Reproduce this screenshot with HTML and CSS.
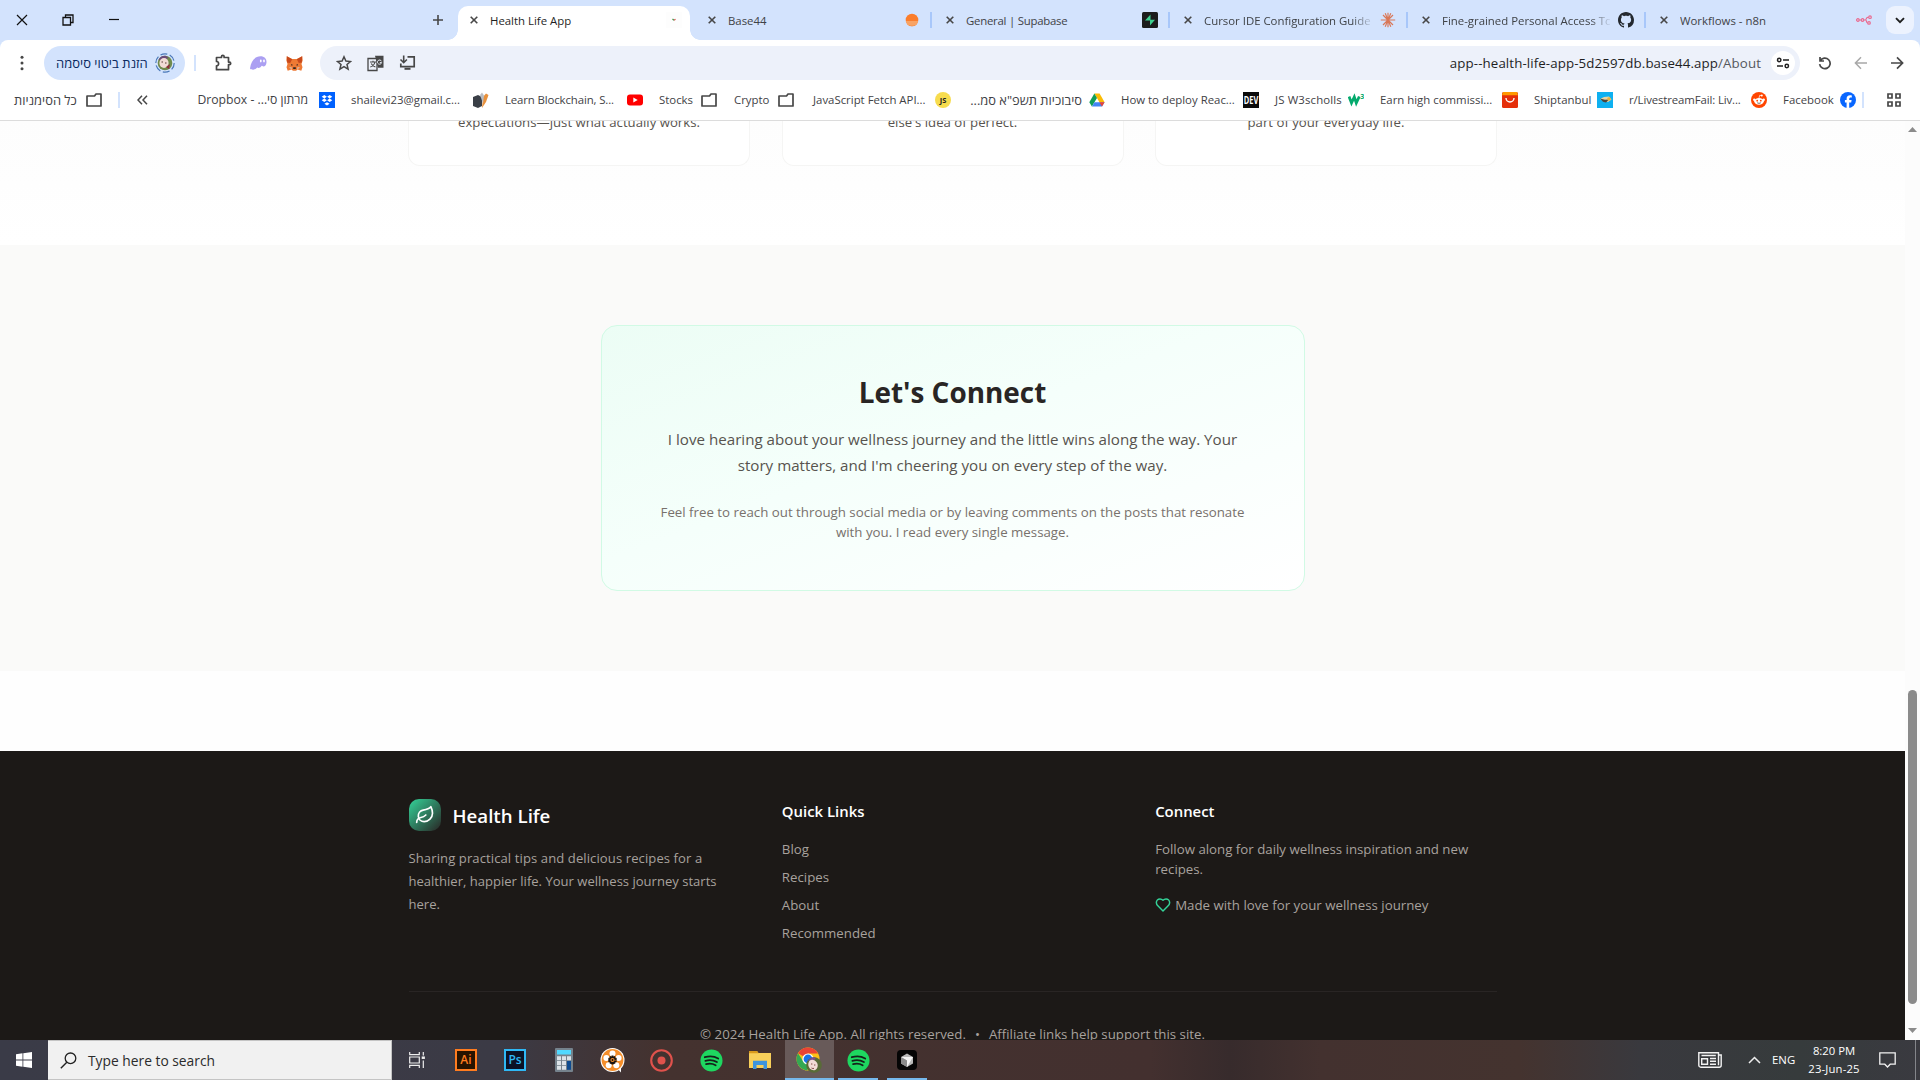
FILE: index.html
```html
<!DOCTYPE html>
<html lang="en">
<head>
<meta charset="utf-8">
<title>Health Life App</title>
<link rel="stylesheet" href="styles.css">
</head>
<body>
<svg class="defs" aria-hidden="true">
  <defs>
    <symbol id="x" viewBox="0 0 8 8"><path d="M.7.7l6.600 6.600M7.300.7L.7 7.300" stroke="currentColor" stroke-width="1.600" fill="none"/></symbol>
    <symbol id="folder" viewBox="0 0 16 16"><path d="M1 4h7.500l1.500-2h5v12H1z" fill="none" stroke="#474747" stroke-width="1.700" stroke-linejoin="round"/></symbol>
    <symbol id="spotify" viewBox="0 0 24 24"><circle cx="12" cy="12" r="11.500" fill="#1ed760"/><path d="M5 8.600c5-1.400 10-1 14 1.300M5.600 12.300c4.200-1.200 8.400-.8 12 1.200M6.300 15.800c3.500-.9 7-.6 10 1.100" stroke="#14211a" stroke-width="1.900" fill="none" stroke-linecap="round"/></symbol>
  </defs>
</svg>

<header class="tabstrip">
  <div class="window-controls">
    <svg width="12" height="12" viewBox="0 0 12 12"><path d="M1 1l10 10M11 1L1 11" stroke="#111" stroke-width="1.200"/></svg>
    <svg width="12" height="12" viewBox="0 0 12 12"><path d="M1 3.500h7.500v7.500H1zM3.500 3V1H11v7.500H9" stroke="#111" stroke-width="1.300" fill="none"/></svg>
    <svg width="12" height="12" viewBox="0 0 12 12"><path d="M1 5.500h10" stroke="#111" stroke-width="1.200"/></svg>
  </div>
  <svg class="new-tab" width="12" height="12" viewBox="0 0 12 12"><path d="M6 1v10M1 6h10" stroke="#474747" stroke-width="1.600"/></svg>
  <nav class="tabs">
    <div class="tab active">
      <svg class="close"><use href="#x"/></svg><span class="tab-title">Health Life App</span>
      <svg class="fav" viewBox="0 0 16 16"><rect width="16" height="16" fill="#fdfdfd"/><path d="M6.500 7l1.500 1.300" stroke="#3c9a4a" stroke-width="1.200"/><path d="M8 8.300l1.500-1" stroke="#d9534f" stroke-width="1.200"/></svg>
    </div>
    <div class="tab">
      <svg class="close"><use href="#x"/></svg><span class="tab-title">Base44</span>
      <svg class="fav" viewBox="0 0 16 16"><circle cx="8" cy="8" r="6.300" fill="#fb7d2b"/><path d="M1.800 9h12.400a6.300 6.300 0 0 1-12.400 0z" fill="#f79a56"/><path d="M2 10h12M3 12h10" stroke="#fcb987" stroke-width=".6"/></svg>
    </div>
    <div class="tab sep">
      <svg class="close"><use href="#x"/></svg><span class="tab-title snug">General | Supabase</span>
      <svg class="fav" viewBox="0 0 16 16"><rect width="16" height="16" rx="1.500" fill="#1c1c1c"/><path d="M8.500 2.500v5.200H13L8 13.500V8.600H3z" fill="#3ecf8e"/></svg>
    </div>
    <div class="tab sep">
      <svg class="close"><use href="#x"/></svg><span class="tab-title faded">Cursor IDE Configuration Guide</span>
      <svg class="fav" viewBox="0 0 16 16"><path d="M8 .8v14.400M.8 8h14.400M3 3l10 10M13 3L3 13M5.200 1.300l5.600 13.400M10.800 1.300L5.200 14.700" stroke="#d97757" stroke-width="1.150"/></svg>
    </div>
    <div class="tab sep">
      <svg class="close"><use href="#x"/></svg><span class="tab-title faded">Fine-grained Personal Access Tokens</span>
      <svg class="fav" viewBox="0 0 16 16"><path fill="#24292f" d="M8 0C3.580 0 0 3.580 0 8c0 3.540 2.290 6.530 5.470 7.590.4.070.55-.17.55-.38 0-.19-.01-.82-.01-1.490-2.010.37-2.530-.49-2.690-.94-.09-.23-.48-.94-.82-1.130-.28-.15-.68-.52-.01-.53.63-.01 1.080.58 1.230.82.72 1.210 1.870.87 2.330.66.070-.52.28-.87.51-1.070-1.780-.2-3.640-.89-3.640-3.950 0-.87.31-1.590.82-2.150-.08-.2-.36-1.020.08-2.120 0 0 .67-.21 2.200.82.64-.18 1.320-.27 2-.27s1.360.09 2 .27c1.530-1.040 2.200-.82 2.200-.82.44 1.100.16 1.920.08 2.120.51.56.82 1.270.82 2.150 0 3.070-1.870 3.750-3.650 3.950.29.25.54.73.54 1.480 0 1.070-.01 1.930-.01 2.200 0 .21.15.46.55.38A8.010 8.010 0 0 0 16 8c0-4.420-3.580-8-8-8z"/></svg>
    </div>
    <div class="tab sep">
      <svg class="close"><use href="#x"/></svg><span class="tab-title">Workflows - n8n</span>
      <svg class="fav" viewBox="0 0 16 16"><g fill="none" stroke="#ea6a8f" stroke-width="1.200"><circle cx="1.900" cy="8" r="1.300"/><circle cx="6.500" cy="8" r="1.300"/><path d="M3.200 8h2M7.800 8h1.400c1.500 0 .8-2.700 2.400-2.700h1M9.500 8c1.500 0 .5 2.900 2.100 2.900"/><circle cx="14" cy="5.200" r="1.300"/><circle cx="13" cy="10.900" r="1.300"/></g></svg>
    </div>
  </nav>
  <button class="tab-search"><svg width="10" height="7" viewBox="0 0 10 7"><path d="M1 1.200l4 4 4-4" fill="none" stroke="#1f1f1f" stroke-width="1.900"/></svg></button>
</header>

<div class="chrome">
  <div class="toolbar">
    <svg class="menu" width="4" height="16" viewBox="0 0 4 16" fill="#474747"><circle cx="2" cy="2.200" r="1.500"/><circle cx="2" cy="8" r="1.500"/><circle cx="2" cy="13.800" r="1.500"/></svg>
    <div class="profile">
      <span class="profile-name" dir="rtl">הזנת ביטוי סיסמה</span>
      <svg width="20" height="20" viewBox="0 0 20 20"><circle cx="10" cy="10" r="9.200" fill="none" stroke="#4a78b8" stroke-width="1.200" stroke-dasharray="7 2.600"/><circle cx="10" cy="10" r="7.300" fill="#6f8a4c"/><path d="M3.500 7a7 7 0 0 1 7-4.300l3 2-5 3z" fill="#6b4a78"/><ellipse cx="9" cy="10" rx="4.600" ry="5" fill="#f2dcd6"/><path d="M11 14l4-3-1 5z" fill="#8e2f3a"/><path d="M6.500 9h1.500M10 10h1.500" stroke="#5b3b34"/></svg>
    </div>
    <span class="rule"></span>
    <div class="extensions">
      <svg width="18" height="18" viewBox="0 0 18 18"><path d="M2.500 3.500h5V2.600a1.300 1.300 0 0 1 2.600 0v.9h4.400v4.600h.9a1.300 1.300 0 0 1 0 2.600h-.9v5h-12v-3.900c2.800 0 2.800-4.300 0-4.300z" fill="none" stroke="#474747" stroke-width="1.700" stroke-linejoin="round"/></svg>
      <svg width="17" height="14" viewBox="0 0 17 14"><path d="M0 12.500C1 5 5 .3 10.500.3c4 0 6.300 2.600 6 6.200-.2 2.700-1.600 4-3 4-1 0-1.300-.7-1.800-.7-1 1.500-2.200 2.200-3.300 2.200-.8 0-1-.5-1-1.100-1 1.500-2.500 2.800-4.200 2.800C1.500 13.700.3 13.300 0 12.500z" fill="#ab9ff2"/><ellipse cx="10.800" cy="5" rx=".9" ry="1.400" fill="#fff"/><ellipse cx="14" cy="5" rx=".9" ry="1.400" fill="#fff"/></svg>
      <svg width="17" height="15" viewBox="0 0 17 15"><path d="M.8.3l5.400 2.800h4.600L16.200.3l.5 4-1.200 3.700 1 3.200-1.200 3.500-3.800-1.100-1.400 1.100H6.900l-1.400-1.100-3.800 1.100-1.200-3.500 1-3.200L.3 4.300z" fill="#ee7a34"/><path d="M.8.3l5.400 3-2 3.700-3-.5zM16.200.3l-5.400 3 2 3.700 3-.5z" fill="#c8491c"/><path d="M5 8l2 1-1.500.8zM12 8l-2 1 1.500.8zM7 12l.4-.8h2.200l.4.800-.4.900H7.400z" fill="#2b2320"/><path d="M3 11l3 .5-.5 2zM14 11l-3 .5.5 2z" fill="#d9c0b0"/></svg>
    </div>
    <div class="omnibox">
      <svg width="16" height="16" viewBox="0 0 16 16"><path d="M8 1.800l1.900 4.300 4.600.4-3.500 3 1.100 4.600L8 11.700l-4.100 2.400L5 9.500l-3.500-3 4.600-.4z" fill="none" stroke="#474747" stroke-width="1.500"/></svg>
      <svg width="17" height="17" viewBox="0 0 17 17"><path d="M1 3.500h9v12H1z" fill="none" stroke="#474747" stroke-width="1.300"/><path d="M8 .8h8.500v12H11z" fill="#474747"/><path d="M14.500 6.300a2.100 2.100 0 1 0 .1 1.300h-1.800" fill="none" stroke="#edf1fa" stroke-width="1"/><path d="M3 7h6M6 5.700V7M8 7c-.6 2.600-2.500 4.300-4.700 5M4.200 8.500c.8 1.500 2.300 2.800 4.200 3.500" stroke="#474747" fill="none" stroke-width="1.100"/></svg>
      <svg width="17" height="16" viewBox="0 0 17 16"><path d="M8.500 1.800h6.700v9.900H1.800V8.500" fill="none" stroke="#474747" stroke-width="1.700"/><path d="M5.500 13.800h6" stroke="#474747" stroke-width="2"/><path d="M4.700.5v6.800M1.500 4.500l3.200 3.200 3.200-3.200" fill="none" stroke="#474747" stroke-width="1.600"/></svg>
      <span class="url">app--health-life-app-5d2597db.base44.app<span class="path">/About</span></span>
      <span class="site-info"><svg width="14" height="12" viewBox="0 0 14 12"><g fill="none" stroke="#1f1f1f" stroke-width="1.500"><circle cx="3.200" cy="3" r="1.700"/><path d="M7 3h6M1 9h6"/><circle cx="10.800" cy="9" r="1.700"/></g></svg></span>
    </div>
    <div class="nav-buttons">
      <svg width="14" height="14" viewBox="0 0 14 14"><path d="M2 1v4h4M2.200 4.800a5.300 5.300 0 1 1-.6 3.400" fill="none" stroke="#474747" stroke-width="1.700"/></svg>
      <svg width="14" height="14" viewBox="0 0 14 14"><path d="M13 7H1.500M7 1.300L1.400 7 7 12.700" fill="none" stroke="#a8a8a8" stroke-width="1.500"/></svg>
      <svg width="14" height="14" viewBox="0 0 14 14"><path d="M1 7h11.500M7 1.300L12.600 7 7 12.700" fill="none" stroke="#474747" stroke-width="1.700"/></svg>
    </div>
  </div>

  <div class="bookmarks">
    <div class="all-bookmarks"><span class="hebrew" dir="rtl">כל הסימניות</span><svg width="16" height="16"><use href="#folder"/></svg></div>
    <span class="rule"></span>
    <svg class="overflow" width="11" height="10" viewBox="0 0 11 10"><path d="M5 .8L1 5l4 4.200M10 .8L6 5l4 4.200" fill="none" stroke="#474747" stroke-width="1.500"/></svg>
    <div class="bookmark-list">
      <a class="bookmark"><span class="mixed" dir="rtl">מרתון סי... - Dropbox</span><svg viewBox="0 0 16 16"><rect width="16" height="16" fill="#0061fe"/><path d="M5.300 3l2.600 1.700-2.600 1.700-2.600-1.700zM10.700 3l2.600 1.700-2.600 1.700-2.600-1.700zM5.300 6.500l2.600 1.700-2.600 1.700-2.600-1.700zM10.700 6.500l2.600 1.700-2.600 1.700-2.600-1.700zM8 10.200l2.600 1.600L8 13.500l-2.600-1.700z" fill="#fff"/></svg></a>
      <a class="bookmark"><span>shailevi23@gmail.c...</span><svg viewBox="0 0 16 16"><path d="M0 5l5-2 4 2v9l-4 2-5-2z" fill="#3a3f47"/><path d="M10 5l3-3.500 2.500 1.500L13 10l-4 6z" fill="#e8913c"/><path d="M7 3l2-2.500 2 3-1 8z" fill="#b8bcc2"/></svg></a>
      <a class="bookmark"><span class="tight">Learn Blockchain, S...</span><svg viewBox="0 0 16 16"><rect y="2.500" width="16" height="11" rx="3" fill="#f00"/><path d="M6.300 5.500v5l4.400-2.500z" fill="#fff"/></svg></a>
      <a class="bookmark w-stocks"><span>Stocks</span><svg><use href="#folder"/></svg></a>
      <a class="bookmark w-crypto"><span>Crypto</span><svg><use href="#folder"/></svg></a>
      <a class="bookmark"><span>JavaScript Fetch API...</span><svg viewBox="0 0 16 16"><circle cx="8" cy="8" r="8" fill="#f7dc4e"/><text x="8" y="10.800" text-anchor="middle" class="js-mark">JS</text></svg></a>
      <a class="bookmark"><span class="hebrew end" dir="rtl">סיבוכיות תשפ"א סמ...</span><svg viewBox="0 0 16 16"><path d="M5.400 1.500h5.200l5 8.700h-5.200z" fill="#fbbc04"/><path d="M5.400 1.500L.3 10.200l2.600 4.400L8 5.900z" fill="#0f9d58"/><path d="M5.500 10.200h10.100L13 14.600H2.900z" fill="#4285f4"/><path d="M15.600 10.200h-5.200l2.600 4.400z" fill="#ea4335"/></svg></a>
      <a class="bookmark"><span>How to deploy Reac...</span><svg viewBox="0 0 16 16"><rect width="16" height="16" fill="#0a0a0a"/><text x="8" y="11.600" text-anchor="middle" class="dev-mark" textLength="14.500" lengthAdjust="spacingAndGlyphs">DEV</text></svg></a>
      <a class="bookmark w-w3"><span class="loose">JS W3scholls</span><svg viewBox="0 0 16 16"><path d="M1 4.500l2.500 6.500 2.800-6 2 6 3-6.500" fill="none" stroke="#04aa6d" stroke-width="2.800"/><text x="12.300" y="7" class="w3-mark">3</text></svg></a>
      <a class="bookmark"><span>Earn high commissi...</span><svg viewBox="0 0 16 16"><rect width="16" height="16" rx="1.500" fill="#e52f0a"/><path d="M1 0h14l1 3.200H0z" fill="#ff9900"/><path d="M4 6a4 4 0 0 0 8 0" fill="none" stroke="#fff" stroke-width="1.400"/></svg></a>
      <a class="bookmark w-ship"><span>Shiptanbul</span><svg viewBox="0 0 16 16"><rect width="16" height="16" fill="#0eb0f0"/><path d="M3 7l4-2 5-.5 2.500 3L11 10l-5-1z" fill="#e9d5a4"/><path d="M3 6.500l5 1.300 4-.3-3 3-3-.7z" fill="#4a463c"/><circle cx="12" cy="7" r="1.800" fill="#e8b23a"/></svg></a>
      <a class="bookmark"><span class="tight">r/LivestreamFail: Liv...</span><svg viewBox="0 0 16 16"><circle cx="8" cy="8" r="8" fill="#ff4500"/><ellipse cx="8" cy="9.300" rx="4.800" ry="3.400" fill="#fff"/><circle cx="3.300" cy="7.700" r="1.200" fill="#fff"/><circle cx="12.700" cy="7.700" r="1.200" fill="#fff"/><circle cx="10.800" cy="3.600" r="1" fill="#fff"/><path d="M8 6l.7-2.700 2 .4" stroke="#fff" stroke-width=".7" fill="none"/><circle cx="6.200" cy="8.700" r=".9" fill="#ff4500"/><circle cx="9.800" cy="8.700" r=".9" fill="#ff4500"/><path d="M6.200 10.800q1.800 1.100 3.600 0" stroke="#333" stroke-width=".7" fill="none"/></svg></a>
      <a class="bookmark w-fb"><span>Facebook</span><svg viewBox="0 0 16 16"><circle cx="8" cy="8" r="8" fill="#0866ff"/><path d="M6.600 16v-5.500H4.900V8h1.700V6.900c0-2.500 1.100-3.700 3.600-3.700.5 0 1.300.1 1.600.2v2.200h-.9c-1.200 0-1.700.5-1.700 1.700V8h2.400l-.4 2.500h-2V16z" fill="#fff"/></svg></a>
    </div>
    <span class="rule"></span>
    <svg class="apps" width="14" height="14" viewBox="0 0 14 14"><path d="M1 1h4v4H1zM9 1h4v4H9zM1 9h4v4H1zM9 9h4v4H9z" fill="none" stroke="#474747" stroke-width="1.700"/></svg>
  </div>
</div>

<div class="viewport">
  <div class="page">
    <main>
      <section class="values">
        <div class="value-card"><p>expectations—just what actually works.</p></div>
        <div class="value-card"><p>else's idea of perfect.</p></div>
        <div class="value-card"><p>part of your everyday life.</p></div>
      </section>
      <section class="connect">
        <div class="connect-card">
          <h2>Let's Connect</h2>
          <p class="lead">I love hearing about your wellness journey and the little wins along the way. Your<br>story matters, and I'm cheering you on every step of the way.</p>
          <p class="note">Feel free to reach out through social media or by leaving comments on the posts that resonate<br>with you. I read every single message.</p>
        </div>
      </section>
    </main>
    <footer class="footer">
      <div class="footer-inner">
        <div class="footer-columns">
          <div>
            <div class="brand">
              <span class="logo"><svg width="20" height="20" viewBox="0 0 24 24" fill="none" stroke="#fff" stroke-width="2" stroke-linecap="round" stroke-linejoin="round"><path d="M11 20A7 7 0 0 1 9.800 6.100C15.500 5 17 4.480 19 2c1 2 2 4.180 2 8 0 5.500-4.780 10-10 10Z"/><path d="M2 21c0-3 1.850-5.360 5.080-6C9.500 14.520 12 13 13 12"/></svg></span>
              <span class="brand-name">Health Life</span>
            </div>
            <p class="about"><span class="about-first">Sharing practical tips and delicious recipes for a</span><br>healthier, happier life. Your wellness journey starts<br>here.</p>
          </div>
          <div>
            <h3>Quick Links</h3>
            <ul class="links"><li>Blog</li><li>Recipes</li><li>About</li><li>Recommended</li></ul>
          </div>
          <div>
            <h3>Connect</h3>
            <p class="follow">Follow along for daily wellness inspiration and new<br>recipes.</p>
            <p class="love"><svg width="16" height="16" viewBox="0 0 24 24" fill="none" stroke="#34d399" stroke-width="2.200" stroke-linecap="round" stroke-linejoin="round"><path d="M19 14c1.490-1.460 3-3.210 3-5.500A5.500 5.500 0 0 0 16.500 3c-1.760 0-3 .5-4.500 2-1.500-1.500-2.740-2-4.500-2A5.500 5.500 0 0 0 2 8.500c0 2.300 1.500 4.050 3 5.500l7 7Z"/></svg>Made with love for your wellness journey</p>
          </div>
        </div>
        <div class="legal"><span>© 2024 Health Life App. All rights reserved.</span><span>•</span><span>Affiliate links help support this site.</span></div>
      </div>
    </footer>
  </div>
  <div class="scrollbar">
    <svg width="9" height="5" viewBox="0 0 9 5"><path d="M4.500 0L9 5H0z" fill="#8b8b8b"/></svg>
    <span class="thumb"></span>
    <svg width="9" height="5" viewBox="0 0 9 5"><path d="M4.500 5L9 0H0z" fill="#8b8b8b"/></svg>
  </div>
</div>

<div class="taskbar">
  <div class="start"><svg width="16" height="16" viewBox="0 0 16 16" fill="#fff"><path d="M0 2.200l6.500-.9v6.300H0zM7.300 1.200L16 0v7.600H7.300zM0 8.400h6.500v6.300L0 13.800zM7.300 8.400H16V16l-8.700-1.200z"/></svg></div>
  <div class="search"><svg width="17" height="17" viewBox="0 0 17 17"><circle cx="10.500" cy="6.300" r="5.300" fill="none" stroke="#222" stroke-width="1.300"/><path d="M6.800 10.300L.8 16.300" stroke="#222" stroke-width="1.400"/></svg><span>Type here to search</span></div>
  <div class="apps-row">
    <div class="app view"><svg width="16" height="16" viewBox="0 0 16 16" fill="none" stroke="#eee" stroke-width="1.200"><path d="M.7 0v2.700h9.600V0M.7 16v-2.700h9.600V16M.7 5h9.600v6H.7zM14.300 0v3.500M14.300 8.500V16"/><path d="M12.700 5.700h3.200" stroke-width="2.500"/></svg></div>
    <div class="app"><svg width="22" height="22" viewBox="0 0 22 22"><rect x="1" y="1" width="20" height="20" fill="#261300" stroke="#ff7c1f" stroke-width="2"/><text x="11" y="15.300" text-anchor="middle" class="adobe ai">Ai</text></svg></div>
    <div class="app"><svg width="22" height="22" viewBox="0 0 22 22"><rect x="1" y="1" width="20" height="20" fill="#0b1226" stroke="#2fb8f5" stroke-width="2"/><text x="11" y="15.300" text-anchor="middle" class="adobe ps">Ps</text></svg></div>
    <div class="app"><svg width="18" height="24" viewBox="0 0 18 24"><rect width="18" height="24" rx="1" fill="#75828c"/><rect x="2" y="2" width="14" height="4.500" fill="#50d9ff"/><path d="M2 8.200h4v4H2zM7 8.200h4v4H7zM12 8.200h4v4h-4zM2 13h4v4H2zM7 13h4v4H7zM2 17.800h4v4H2zM7 17.800h4v4H7z" fill="#dce3e8"/><path d="M12 13h4v8.800h-4z" fill="#0e4b8f"/></svg></div>
    <div class="app"><svg width="25" height="25" viewBox="0 0 25 25"><circle cx="12.500" cy="12" r="12" fill="#fff"/><path d="M16 19h5v5.500z" fill="#fff"/><circle cx="12.500" cy="12" r="10.900" fill="#f58e2a"/><g fill="#fff"><circle cx="12.500" cy="5.600" r="3"/><circle cx="6.400" cy="10" r="3"/><circle cx="18.600" cy="10" r="3"/><circle cx="8.700" cy="17.200" r="3"/><circle cx="16.300" cy="17.200" r="3"/></g><path d="M12.500 7.500v9M8.300 10.600l8.400 2.800M16.700 10.600l-8.400 2.800M10 15.500l5-7M15 15.500l-5-7" stroke="#1b1510" stroke-width="2"/><circle cx="12.500" cy="12" r="2.100" fill="#f58e2a"/><circle cx="12.500" cy="12" r="1" fill="#1b1510"/></svg></div>
    <div class="app"><svg width="23" height="23" viewBox="0 0 23 23"><circle cx="11.500" cy="11.500" r="10.300" fill="none" stroke="#e0524c" stroke-width="2.100"/><circle cx="11.500" cy="11.500" r="4" fill="#e0524c"/></svg></div>
    <div class="app"><svg width="23" height="23"><use href="#spotify"/></svg></div>
    <div class="app"><svg width="22" height="20" viewBox="0 0 22 20"><path d="M0 1h8l1.500 2H22v15H0z" fill="#f8cf5a"/><path d="M0 1h8l1.500 2.200H0z" fill="#d99a1c"/><path d="M4 19v-8.200h14V19h-3.500v-4h-7v4z" fill="#3d94de"/></svg></div>
    <div class="app current"><svg width="26" height="26" viewBox="0 0 26 26"><circle cx="12" cy="12" r="11.500" fill="#fbc116"/><path d="M12 12L2 6.300A11.500 11.500 0 0 1 22 6.500H12z" fill="#ea4335"/><path d="M2 6.300A11.500 11.500 0 0 0 11 23.500L16.500 14 7 14z" fill="#34a853"/><circle cx="12" cy="12" r="5.600" fill="#fff"/><circle cx="12" cy="12" r="4.400" fill="#1a73e8"/><circle cx="18" cy="18" r="7.800" fill="#596b38"/><path d="M12 14a7 7 0 0 1 8-3.500l-2 3z" fill="#7b4f8d"/><ellipse cx="17" cy="18" rx="4.600" ry="5.400" fill="#f3dcd6" transform="rotate(-25 17 18)"/><path d="M15 17h1.400M18 18h1.400M15.500 21q1.500 1 2.500.3" stroke="#7a4035" stroke-width=".9" fill="none"/></svg></div>
    <div class="app running"><svg width="23" height="23"><use href="#spotify"/></svg></div>
    <div class="app running"><svg width="20" height="20" viewBox="0 0 20 20"><rect width="20" height="20" rx="4" fill="#050505"/><path d="M10 3.500l6 3.400v6.700l-6 3.400-6-3.400V6.900z" fill="#b9b9b9"/><path d="M4 6.900h12L10 17v-6.500z" fill="#f4f4f4"/><path d="M4 6.900l6 3.600V17l-6-3.400z" fill="#8a8a8a"/></svg></div>
  </div>
  <div class="tray">
    <div class="news"><svg width="24" height="16" viewBox="0 0 24 16" fill="none" stroke="#f2f2f2" stroke-width="1.400"><path d="M20.500 3h2.700v10.200a2 2 0 0 1-2 2H2.800a2 2 0 0 1-2-2V.8h19.700v12.400"/><path d="M3.500 3.500h14.300M12 6.500h6M12 9.300h6M12 12.300h6M3.700 6.700h5.800v5.600H3.700z"/></svg></div>
    <div class="chevron"><svg width="13" height="8" viewBox="0 0 13 8"><path d="M1 7l5.500-5.500L12 7" fill="none" stroke="#eee" stroke-width="1.500"/></svg></div>
    <div class="lang">ENG</div>
    <div class="clock"><span>8:20 PM</span><span class="date">23-Jun-25</span></div>
    <div class="notify"><svg width="17" height="16" viewBox="0 0 17 16"><path d="M.8.8h15.400v11.400h-5L8.500 15l-2.700-2.800h-5z" fill="none" stroke="#f2f2f2" stroke-width="1.300"/></svg></div>
    <span class="show-desktop"></span>
  </div>
</div>
</body>
</html>
```
FILE: styles.css
```css
* { box-sizing: border-box; }

body {
  margin: 0;
  width: 1920px;
  height: 1080px;
  overflow: hidden;
  display: flex;
  flex-direction: column;
  font-family: "Open Sans", "Liberation Sans", sans-serif;
  font-size: 11.4px;
  background: #d3e3fd;
}
svg { display: block; flex: none; }
h2, h3, p, ul { margin: 0; padding: 0; }
.defs { position: absolute; width: 0; height: 0; }

/* Tab strip */
.tabstrip {
  flex: none;
  height: 40px;
  display: flex;
  align-items: center;
  background: #d3e3fd;
}
.window-controls { display: flex; gap: 34px; padding-left: 16px; }
.new-tab { margin-left: 312px; }
.tabs { display: flex; align-self: stretch; margin-left: 11px; width: 1428px; }
.tab {
  position: relative;
  width: 238px;
  height: 28px;
  margin-top: 6px;
  padding: 0 11px 0 15px;
  display: flex;
  align-items: center;
  color: #3f4246;
}
.tab.active { color: #1f1f1f; height: 34px; padding-bottom: 6px; z-index: 0; }
.tab.active::before {
  content: "";
  position: absolute;
  inset: 0 3px;
  z-index: -1;
  border-radius: 10px 10px 0 0;
  background: #fff;
}
.tab.active::after {
  content: "";
  position: absolute;
  left: -7px;
  right: -7px;
  bottom: 0;
  height: 10px;
  z-index: -1;
  background:
    radial-gradient(circle at 0 0, transparent 9.5px, #fff 10px) left / 10px 10px no-repeat,
    radial-gradient(circle at 100% 0, transparent 9.5px, #fff 10px) right / 10px 10px no-repeat;
}
.tab.sep::before {
  content: "";
  position: absolute;
  left: -1px;
  top: 6px;
  width: 2px;
  height: 16px;
  background: #a8c7fa;
}
.close { width: 8px; height: 8px; color: #474747; }
.tab-title { margin-left: 12px; width: 168px; overflow: hidden; white-space: nowrap; }
.tab-title.snug { letter-spacing: -.24px; }
.tab-title.faded { mask-image: linear-gradient(to right, #000 148px, transparent 170px); }
.fav { width: 16px; height: 16px; margin-left: 8px; }
.tab-search {
  width: 28px;
  height: 28px;
  margin-left: 3px;
  padding: 0;
  border: 0;
  border-radius: 9px;
  background: #ecf2fe;
  display: grid;
  place-items: center;
}

/* Toolbar */
.chrome {
  flex: none;
  height: 81px;
  background: #fff;
  border-radius: 8px 8px 0 0;
  border-bottom: 1px solid #dcdcdc;
}
.toolbar { display: flex; align-items: center; height: 46px; }
.menu { margin-left: 20px; }
.profile {
  margin-left: 20px;
  width: 141px;
  height: 34px;
  padding: 0 10px 0 12px;
  border-radius: 17px;
  background: #d3e3fd;
  display: flex;
  align-items: center;
  justify-content: space-between;
}
.profile-name { font-size: 13px; color: #0a2a60; white-space: nowrap; }
.rule { width: 2px; height: 16px; background: #d3e3fd; }
.toolbar .rule { margin-left: 9px; }
.extensions { display: flex; align-items: center; gap: 18.5px; margin-left: 17.5px; width: 106.5px; }
.omnibox {
  width: 1480px;
  height: 34px;
  border-radius: 17px;
  background: #edf1fa;
  display: flex;
  align-items: center;
  gap: 15px;
  padding: 0 5px 0 16px;
}
.url {
  margin-left: auto;
  font-size: 13.3px;
  letter-spacing: .1px;
  color: #1f1f1f;
  white-space: nowrap;
}
.path { color: #55585c; }
.site-info {
  width: 24px;
  height: 24px;
  margin-left: -5px;
  border-radius: 50%;
  background: #fff;
  display: grid;
  place-items: center;
}
.nav-buttons { display: flex; gap: 22px; margin-left: 18px; }

/* Bookmarks bar */
.bookmarks { display: flex; align-items: center; height: 28px; color: #3f4246; }
.all-bookmarks { display: flex; align-items: center; width: 118px; padding-left: 14px; gap: 9px; }
.hebrew { font-size: 12.9px; white-space: nowrap; }
.bookmarks .overflow { margin-left: 17px; }
.bookmark-list { display: flex; margin-left: 49px; }
.bookmark { width: 154px; padding-right: 16px; display: flex; align-items: center; }
.bookmark span { flex: 1; white-space: nowrap; line-height: 20px; }
.bookmark svg { width: 16px; height: 16px; }
.bookmark .mixed { font-size: 12.2px; text-align: right; padding-right: 11px; }
.bookmark .end { padding-right: 7px; text-align: right; }
.bookmark .tight { letter-spacing: -.12px; }
.bookmark .loose { letter-spacing: .14px; }
.w-stocks { width: 75px; padding-right: 17px; }
.w-crypto { width: 79px; padding-right: 19px; }
.w-w3 { width: 105px; }
.w-ship { width: 95px; }
.w-fb { width: 79px; padding-right: 6px; }
.js-mark { font: 700 7.5px "Open Sans", sans-serif; fill: #222; }
.dev-mark { font: 700 10px "Open Sans", sans-serif; fill: #fff; }
.w3-mark { font: 700 7px "Open Sans", sans-serif; fill: #04aa6d; }
.apps { margin-left: 23px; }

/* Web page */
.viewport { flex: none; height: 919px; display: flex; }
.page {
  width: 1905px;
  overflow: hidden;
  background: #fefefe;
}
.values {
  height: 124px;
  padding-left: 408px;
  display: grid;
  grid-template-columns: repeat(3, 342px);
  gap: 31.5px;
  background: linear-gradient(#fdfdfd, #fff);
}
.value-card {
  height: 45px;
  background: #fff;
  border: 1px solid #f5f5f4;
  border-top: 0;
  border-radius: 0 0 12px 12px;
  text-align: center;
}
.value-card p {
  margin-top: -10px;
  font-size: 13.2px;
  line-height: 22.75px;
  color: #57534e;
}
.connect { padding: 80px 0; background: #fafaf9; }
.connect-card {
  width: 704px;
  margin: 0 auto;
  padding: 48px 0;
  border: 1px solid #d1fae5;
  border-radius: 16px;
  background: linear-gradient(to bottom right, #ecfdf5, #f5fffb 45%, #fff);
  text-align: center;
}
.connect-card h2 { padding-top: 1px; font-size: 27.9px; line-height: 35px; font-weight: 700; color: #292524; }
.lead { margin-top: 16px; font-size: 15.15px; line-height: 26px; color: #57534e; }
.note { margin-top: 24px; font-size: 13.29px; line-height: 20px; color: #78716c; }
main { padding-bottom: 80px; }

/* Footer */
.footer { background: #1c1917; color: #a8a29e; font-size: 13.27px; line-height: 20px; }
.footer-inner { width: 1088px; margin: 0 auto; padding-top: 48px; }
.footer-columns {
  display: grid;
  grid-template-columns: repeat(3, 1fr);
  gap: 32px;
  white-space: nowrap;
}
.brand { display: flex; align-items: center; gap: 12px; }
.logo {
  width: 32px;
  height: 32px;
  border-radius: 10px;
  background: linear-gradient(135deg, #34d399, #292524);
  display: grid;
  place-items: center;
}
.brand-name { padding-top: 2px; font-size: 18.7px; font-weight: 600; color: #fff; }
.about { margin-top: 16px; font-size: 13.05px; line-height: 22.75px; }
.about-first { letter-spacing: .1px; }
.footer h3 { font-size: 14.9px; line-height: 24px; font-weight: 600; color: #fff; }
.links { margin-top: 16px; list-style: none; display: grid; gap: 8px; }
.follow { margin-top: 16px; }
.love { margin-top: 16px; display: flex; align-items: center; gap: 4px; }
.legal {
  margin-top: 48px;
  padding: 32px 0;
  border-top: 1px solid #292524;
  display: flex;
  justify-content: center;
  gap: 9px;
}
.legal span:first-child { letter-spacing: .03px; }

/* Scrollbar */
.scrollbar {
  width: 15px;
  padding: 6px 0 7px;
  background: #fcfcfc;
  display: flex;
  flex-direction: column;
  align-items: center;
}
.thumb { width: 9px; height: 314px; margin: auto 0 24px; border-radius: 5px; background: #8b8b8b; }

/* Taskbar */
.taskbar {
  height: 40px;
  display: flex;
  color: #fff;
  background: linear-gradient(to right, #3a3b47, #3b3a45 500px, #44322f 660px, #43302f 1150px, #372b2c 1230px, #43312f 1320px, #44332f 1520px, #39393e 1640px, #363b3c 1800px, #3a3a40);
}
.start { width: 48px; display: grid; place-items: center; }
.search {
  width: 344px;
  padding-left: 12px;
  display: flex;
  align-items: center;
  gap: 11px;
  background: #f1f1f1;
  border: 1px solid #c4c4c4;
  border-left: 0;
  color: #2b2b2b;
  font-size: 13.8px;
}
.apps-row { display: flex; }
.app { width: 49.1px; display: grid; place-items: center; }
.app.view { width: 49px; }
.app.current { background: #685a59; box-shadow: inset 0 -2px #76b9ed; }
.app.running { background: linear-gradient(#76b9ed, #76b9ed) center bottom / 40px 2px no-repeat; }
.adobe { font: 600 12px "Open Sans", sans-serif; }
.ai { fill: #ff7c1f; }
.ps { fill: #2fb8f5; }
.tray { display: flex; align-items: center; margin-left: auto; }
.tray > div { display: grid; place-items: center; }
.news { width: 48px; }
.chevron { width: 40px; }
.lang { width: 23px; margin: -2px 2px 0 -2px; }
.clock { width: 74px; line-height: 18px; font-size: 11.3px; }
.date { letter-spacing: .15px; }
.notify { width: 32px; }
.show-desktop { width: 1px; height: 40px; margin: 0 4px 0 12px; background: #84858a; }
```
